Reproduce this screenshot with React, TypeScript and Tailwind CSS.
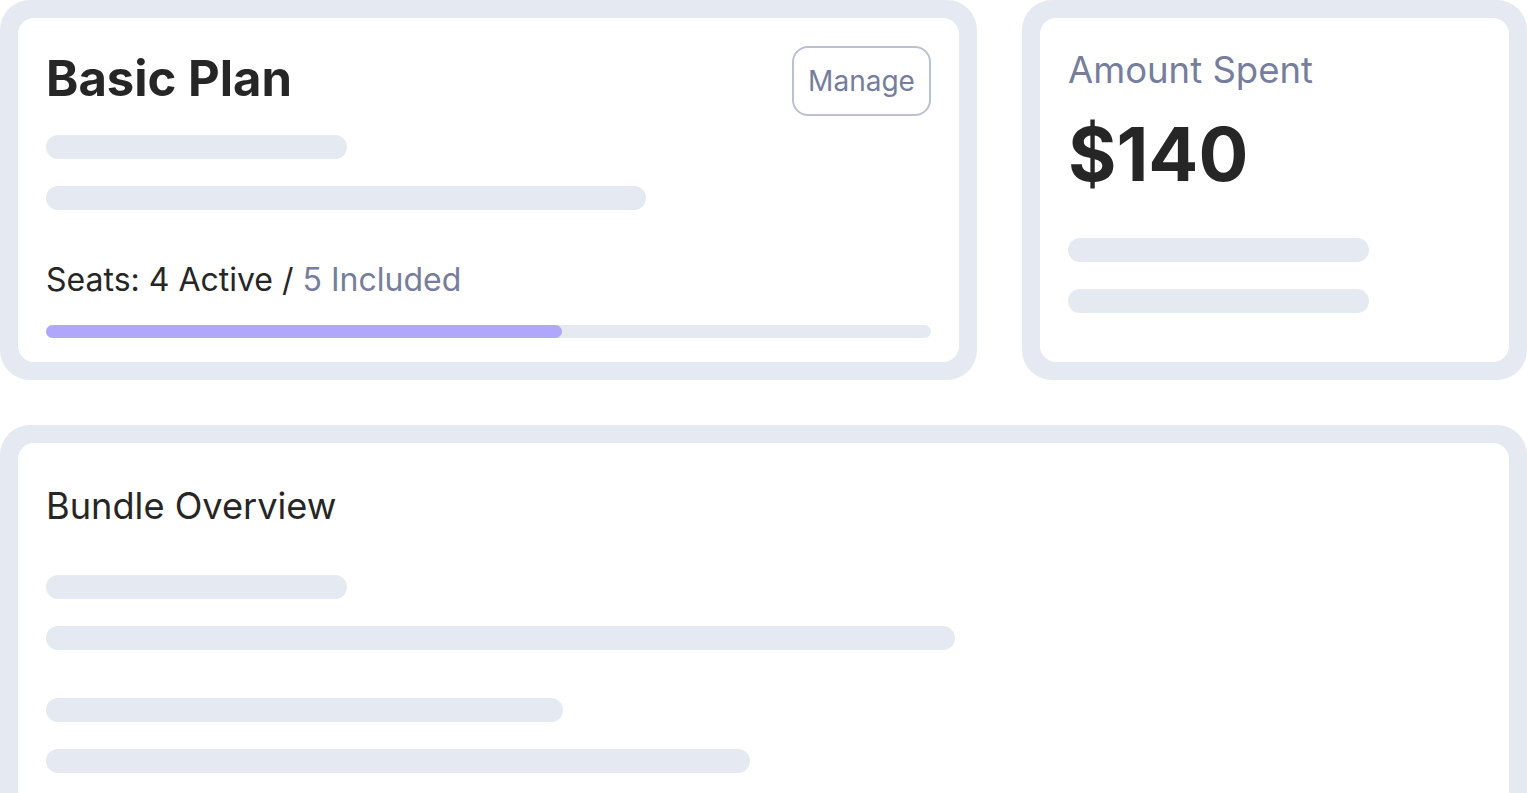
import React from "react";

function Bar({ w, className = "" }: { w: string; className?: string }) {
  return <div className={`h-6 rounded-full bg-[#e5e9f1] ${w} ${className}`} />;
}

export default function App() {
  return (
    <div
      className="w-[1527px] h-[793px] overflow-hidden bg-white text-[#262626]"
      style={{ fontFamily: "Inter, 'Noto Sans', sans-serif" }}
    >
      <div className="flex flex-col gap-[45px]">
        <div className="flex gap-[45px] h-[380px]">
          {/* Basic Plan card */}
          <div className="w-[977px] shrink-0 rounded-[30px] bg-[#e5e9f1] p-[18px]">
            <div className="h-full rounded-[16px] bg-white px-[28px] pt-[28px]">
              <div className="flex items-start justify-between h-[70px]">
                <h1 className="mt-[8px] text-[49px] leading-[49px] font-bold">
                  Basic Plan
                </h1>
                <button className="h-[70px] w-[139px] rounded-[16px] border-2 border-[#bac1d3] text-[28px] text-[#767d9d]">
                  Manage
                </button>
              </div>
              <Bar w="w-[301px]" className="mt-[19px]" />
              <Bar w="w-[600px]" className="mt-[27px]" />
              <div className="mt-[50px] text-[32px] leading-[40px]">
                Seats: 4 Active / <span className="text-[#767d9d]">5 Included</span>
              </div>
              <div className="mt-[25px] h-[13px] rounded-full bg-[#e5e9f1]">
                <div className="h-full w-[516px] rounded-full bg-[#b0a6fb]" />
              </div>
            </div>
          </div>
          {/* Amount Spent card */}
          <div className="flex-1 rounded-[30px] bg-[#e5e9f1] p-[18px]">
            <div className="h-full rounded-[16px] bg-white px-[28px] pt-[32px]">
              <div className="text-[36.5px] leading-[40px] text-[#767d9d]">Amount Spent</div>
              <div className="mt-[27px] text-[74px] leading-[74px] font-bold">
                $140
              </div>
              <Bar w="w-[301px]" className="mt-[47px]" />
              <Bar w="w-[301px]" className="mt-[27px]" />
            </div>
          </div>
        </div>
        {/* Bundle Overview card */}
        <div className="h-[500px] rounded-[30px] bg-[#e5e9f1] p-[18px]">
          <div className="h-full rounded-[16px] bg-white px-[28px] pt-[41px]">
            <div className="text-[36.2px] leading-[44px]">Bundle Overview</div>
            <Bar w="w-[301px]" className="mt-[47px]" />
            <Bar w="w-[909px]" className="mt-[27px]" />
            <Bar w="w-[517px]" className="mt-[48px]" />
            <Bar w="w-[704px]" className="mt-[27px]" />
          </div>
        </div>
      </div>
    </div>
  );
}
